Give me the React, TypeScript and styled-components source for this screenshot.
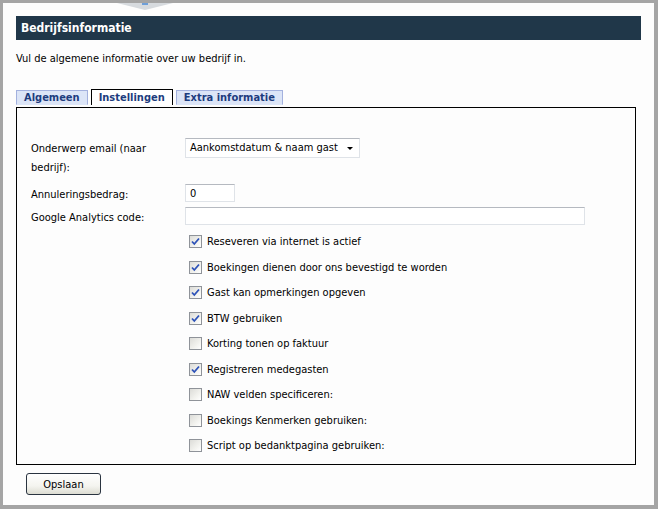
import styled, { createGlobalStyle } from "styled-components";

const GlobalStyle = createGlobalStyle`
  html, body {
    margin: 0;
    padding: 0;
    background: #ffffff;
  }
  body {
    font-family: "DejaVu Sans Condensed", "Liberation Sans", sans-serif;
    font-size: 11px;
    color: #000;
  }
`;

const Frame = styled.div`
  position: relative;
  box-sizing: border-box;
  width: 658px;
  height: 509px;
  border-style: solid;
  border-color: #a5a5a5;
  border-width: 3px 4px 4px 3px;
  background: #fdfdfd;
  padding: 13px 13px 0 13px;
`;

const Notch = styled.div`
  position: absolute;
  top: 0;
  left: 114px;
  width: 56px;
  height: 7px;
  background: #d6dade;
  clip-path: polygon(0 0, 100% 0, 50% 100%);

  &::after {
    content: "";
    position: absolute;
    left: 25px;
    top: 0;
    width: 6px;
    height: 2px;
    background: #6f9fd8;
  }
`;

const Header = styled.h1`
  margin: 0;
  height: 24px;
  background: #203749;
  color: #fff;
  font-size: 12px;
  font-weight: bold;
  line-height: 24px;
  padding-left: 5px;
`;

const Intro = styled.p`
  margin: 12px 0 0;
  line-height: 13px;
`;

const TabBar = styled.div`
  display: flex;
  gap: 3px;
  margin-top: 24px;
  height: 16px;
`;

const Tab = styled.div<{ $active?: boolean }>`
  box-sizing: border-box;
  height: ${(p) => (p.$active ? "16px" : "15px")};
  margin-top: ${(p) => (p.$active ? "0" : "1px")};
  padding: 0 7px;
  font-size: 11px;
  font-weight: bold;
  line-height: ${(p) => (p.$active ? "15px" : "13px")};
  color: #1d3c7e;
  background: ${(p) => (p.$active ? "#fff" : "#dce5f7")};
  border: 1px solid ${(p) => (p.$active ? "#000" : "#a3b1de")};
  border-bottom: ${(p) => (p.$active ? "none" : "1px solid #dce5f7")};
  white-space: nowrap;
`;

const Panel = styled.div`
  box-sizing: border-box;
  width: 620px;
  height: 358px;
  margin-top: 2px;
  border: 1px solid #000;
  padding: 30px 0 0 14px;
`;

const Form = styled.div`
  display: grid;
  grid-template-columns: 154px 1fr;
  align-items: start;
`;

const Label = styled.div<{ $gap?: number }>`
  line-height: 19px;
  padding-top: 1px;
  margin-bottom: ${(p) => p.$gap ?? 6}px;
`;

const Field = styled.div<{ $gap?: number }>`
  margin-bottom: ${(p) => p.$gap ?? 6}px;
`;

const TextInput = styled.input<{ $width: number }>`
  box-sizing: border-box;
  width: ${(p) => p.$width}px;
  height: 18px;
  margin: 0;
  padding: 0 4px;
  border: 1px solid #dfe3e8;
  border-top-color: #b5b9c0;
  background: #fff;
  font: inherit;
  font-size: 11px;
  outline: none;
`;

const SelectBox = styled.div`
  box-sizing: border-box;
  position: relative;
  width: 175px;
  height: 20px;
  border: 1px solid #dfe3e8;
  border-top-color: #b5b9c0;
  background: #fff;
  padding-left: 4px;
  line-height: 17px;

  &::after {
    content: "";
    position: absolute;
    right: 6px;
    top: 8px;
    border-left: 3.5px solid transparent;
    border-right: 3.5px solid transparent;
    border-top: 3.5px solid #000;
  }
`;

const Checks = styled.div`
  grid-column: 2;
  margin-top: 2px;
`;

const CheckRow = styled.label`
  display: flex;
  align-items: center;
  gap: 5px;
  height: 25.5px;
  padding-left: 4px;
`;

const Box = styled.span`
  box-sizing: border-box;
  display: inline-flex;
  align-items: center;
  justify-content: center;
  width: 13px;
  height: 13px;
  border: 1px solid #8f9399;
  background: linear-gradient(135deg, #dcdcd8 0%, #f2f2ee 60%, #ffffff 100%);
`;

const Footer = styled.div`
  padding: 8px 0 0 10px;
`;

const Button = styled.button`
  box-sizing: border-box;
  width: 75px;
  height: 22px;
  border: 1px solid #2a3440;
  border-radius: 3px;
  background: linear-gradient(#ffffff 0%, #f4f4ef 60%, #dcdcd2 100%);
  font: inherit;
  font-size: 11px;
  color: #000;
  padding: 0;
`;

type Check = { label: string; checked: boolean };

const checks: Check[] = [
  { label: "Reseveren via internet is actief", checked: true },
  { label: "Boekingen dienen door ons bevestigd te worden", checked: true },
  { label: "Gast kan opmerkingen opgeven", checked: true },
  { label: "BTW gebruiken", checked: true },
  { label: "Korting tonen op faktuur", checked: false },
  { label: "Registreren medegasten", checked: true },
  { label: "NAW velden specificeren:", checked: false },
  { label: "Boekings Kenmerken gebruiken:", checked: false },
  { label: "Script op bedanktpagina gebruiken:", checked: false },
];

function CheckBox({ checked }: { checked: boolean }) {
  return (
    <Box>
      {checked && (
        <svg width="9" height="9" viewBox="0 0 9 9">
          <path d="M1 4.5 L3.3 7 L8 1.5" fill="none" stroke="#2d52b8" strokeWidth="1.8" />
        </svg>
      )}
    </Box>
  );
}

export default function App() {
  return (
    <>
      <GlobalStyle />
      <Frame>
        <Notch />
        <Header>Bedrijfsinformatie</Header>
        <Intro>Vul de algemene informatie over uw bedrijf in.</Intro>
        <TabBar>
          <Tab>Algemeen</Tab>
          <Tab $active>Instellingen</Tab>
          <Tab>Extra informatie</Tab>
        </TabBar>
        <Panel>
          <Form>
            <Label $gap={7}>
              Onderwerp email (naar
              <br />
              bedrijf):
            </Label>
            <Field $gap={7}>
              <SelectBox>Aankomstdatum &amp; naam gast</SelectBox>
            </Field>
            <Label $gap={3}>Annuleringsbedrag:</Label>
            <Field $gap={3}>
              <TextInput $width={50} defaultValue="0" />
            </Field>
            <Label $gap={0}>Google Analytics code:</Label>
            <Field $gap={0}>
              <TextInput $width={400} defaultValue="" />
            </Field>
            <Checks>
              {checks.map((c) => (
                <CheckRow key={c.label}>
                  <CheckBox checked={c.checked} />
                  {c.label}
                </CheckRow>
              ))}
            </Checks>
          </Form>
        </Panel>
        <Footer>
          <Button>Opslaan</Button>
        </Footer>
      </Frame>
    </>
  );
}
